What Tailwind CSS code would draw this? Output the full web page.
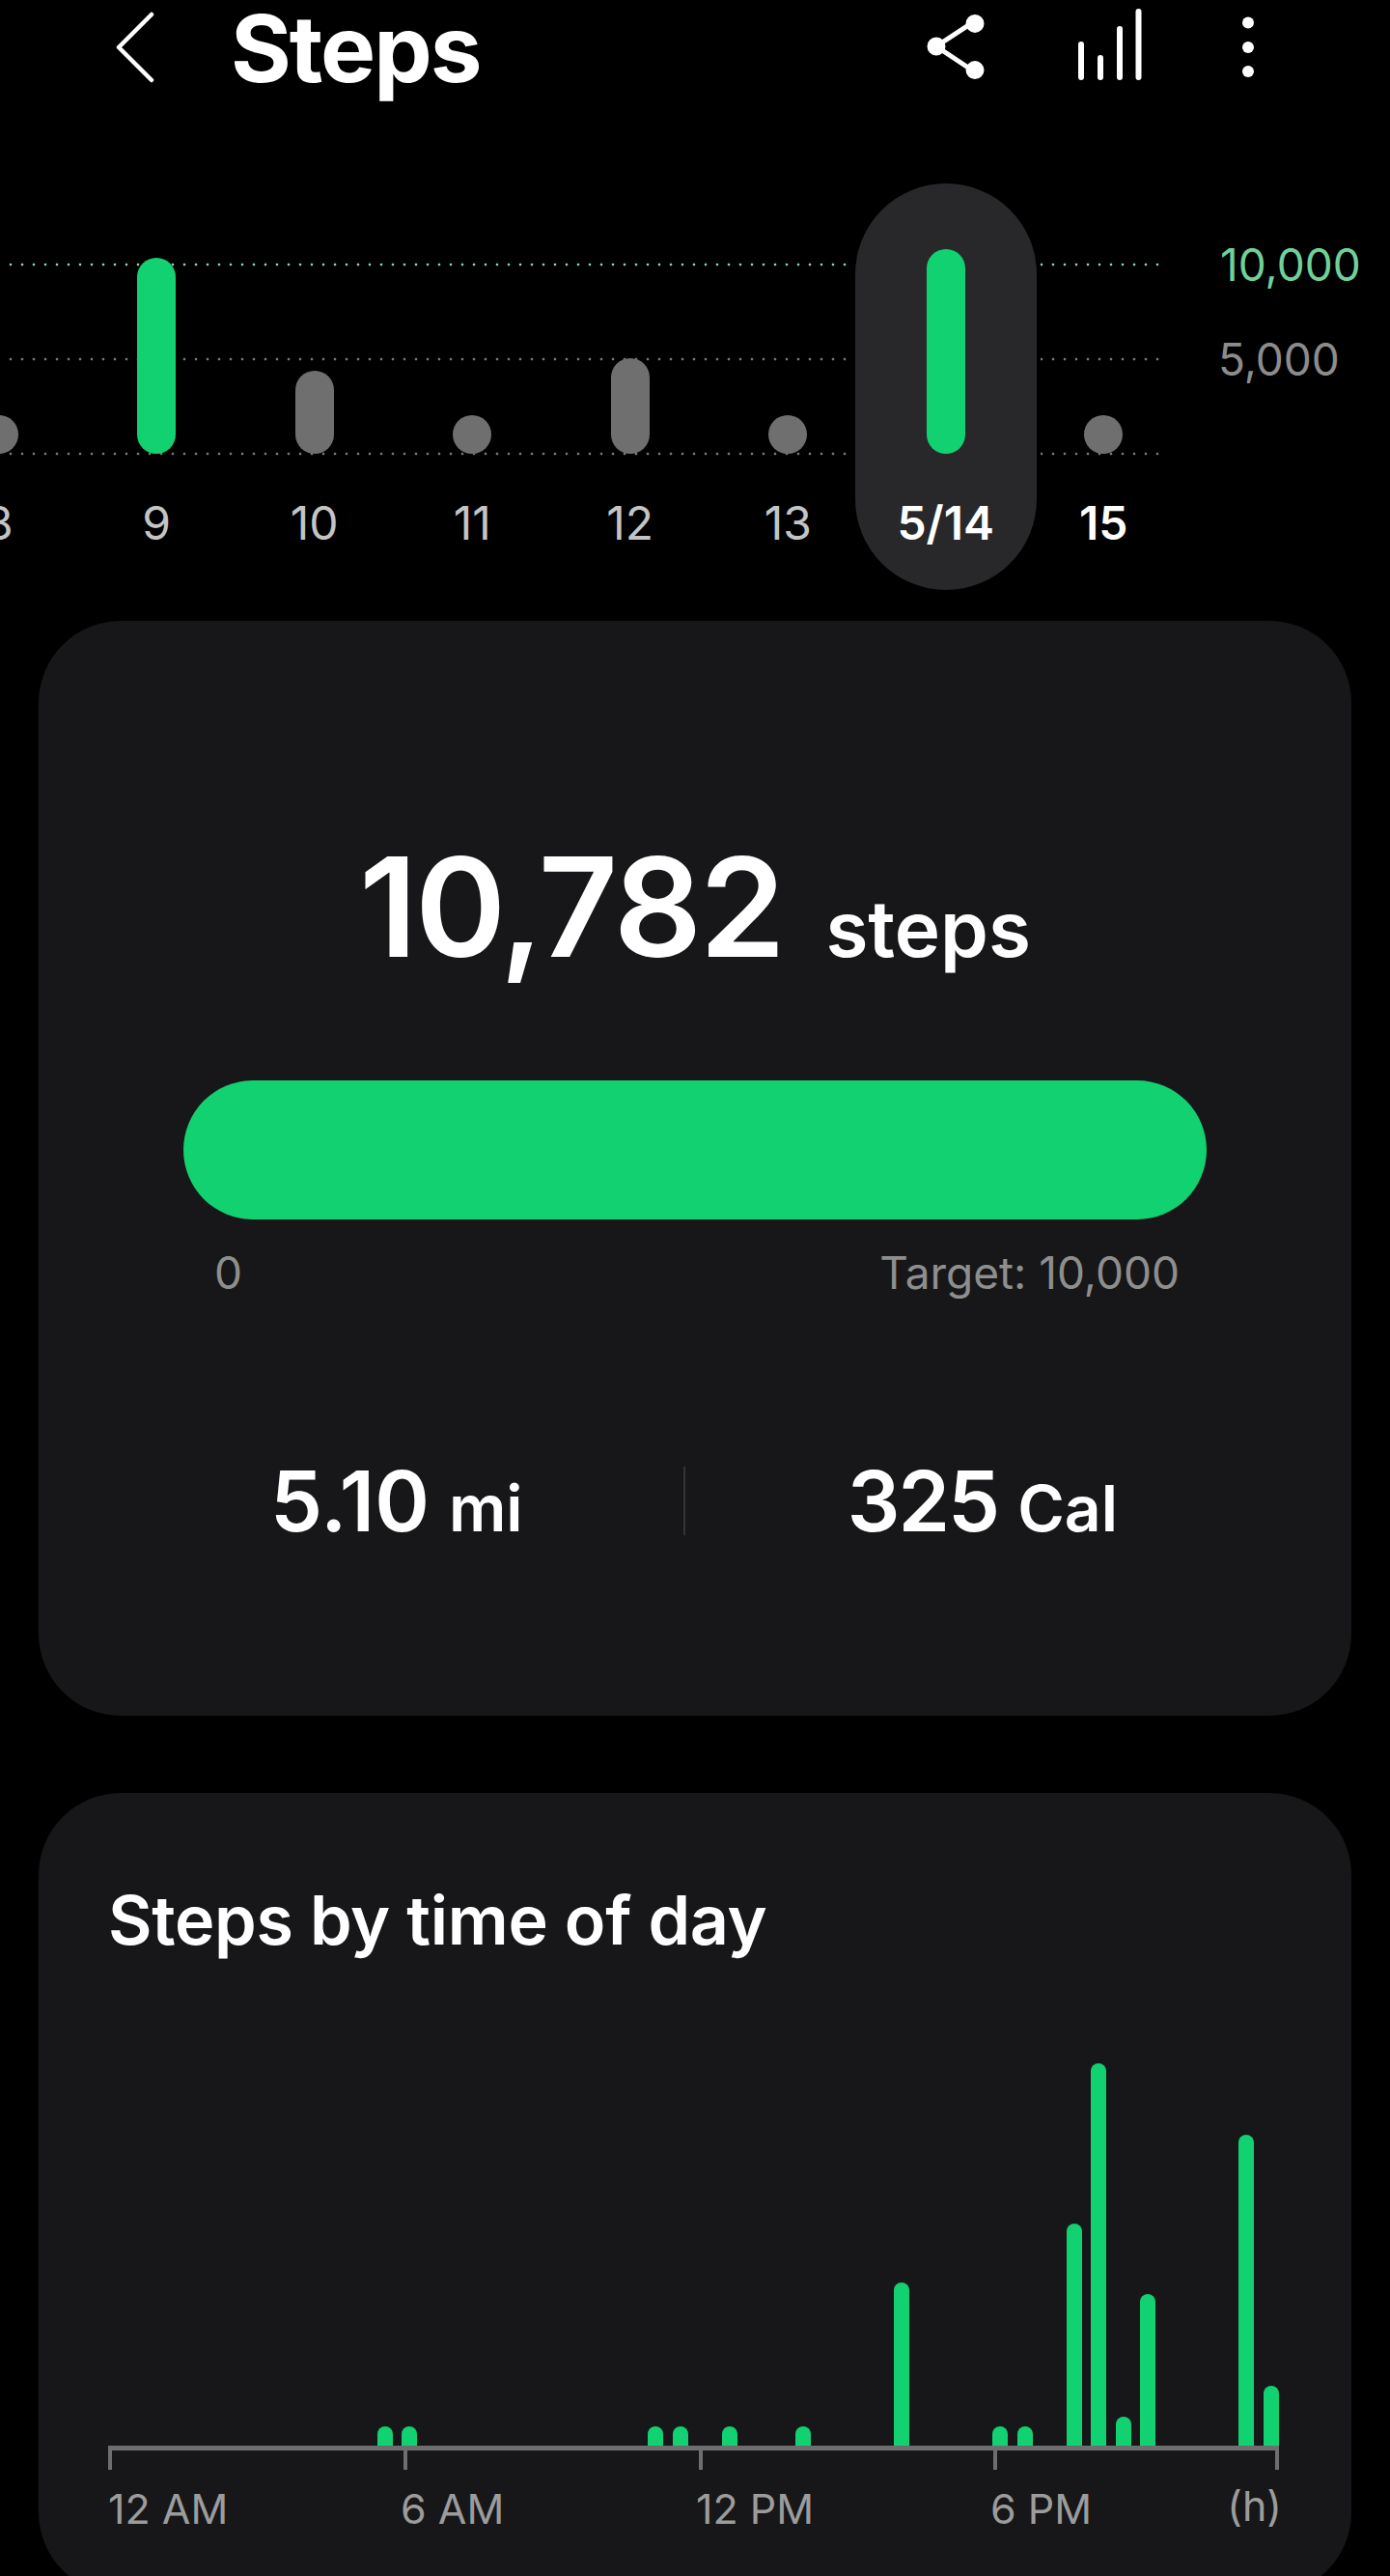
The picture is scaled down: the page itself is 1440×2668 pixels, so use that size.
<!DOCTYPE html>
<html lang="en">
<head>
    <meta charset="UTF-8">
    <meta name="viewport" content="width=device-width, initial-scale=1.0">
    <title>Steps</title>
    <script src="https://cdn.jsdelivr.net/npm/@tailwindcss/browser@4"></script>
</head>
<body class="bg-black">
<div class="w-[1440px] h-[2668px] overflow-hidden bg-black text-white font-['Inter','Noto_Sans',sans-serif]">

    <!-- Top bar -->
    <header class="flex items-start h-[190px] pt-[2px]">
        <svg class="ml-[120px] mt-[9px] w-[42px] h-[76px]" viewBox="0 0 42 76" fill="none" stroke="white" stroke-width="4.5" stroke-linecap="round" stroke-linejoin="round"><path d="M37 4 3 38l34 34"/></svg>
        <h1 class="ml-[77px] w-[260px] text-[96px] leading-[96px] font-bold tracking-[-2px]">Steps</h1>
        <svg class="ml-[461px] mt-[8px] w-[64px] h-[76px]" viewBox="0 0 64 76" fill="white" stroke="white" stroke-width="5"><path d="M46 14.400 10 38l36 24" fill="none"/><circle cx="10" cy="38" r="7"/><circle cx="50" cy="14.400" r="7"/><circle cx="50" cy="62.600" r="7"/></svg>
        <svg class="ml-[90px] mt-[6px] w-[72px] h-[76px]" viewBox="0 0 72 76" fill="none" stroke="white" stroke-width="6" stroke-linecap="round"><path d="M6 72V38M26 72V52M46 72V22M65.500 72V4"/></svg>
        <svg class="ml-[95px] mt-[8px] w-[24px] h-[76px]" viewBox="0 0 24 76" fill="white"><circle cx="12" cy="13.500" r="6"/><circle cx="12" cy="39" r="6"/><circle cx="12" cy="64" r="6"/></svg>
    </header>

    <!-- Daily chart -->
    <section class="relative h-[453px]">
        <div class="absolute left-[5px] top-[82px] w-[1204px] h-1 bg-[radial-gradient(circle,#86d8ac_1.5px,transparent_1.6px)] bg-[length:12px_4px]"></div>
        <div class="absolute left-[5px] top-[180px] w-[1204px] h-1 bg-[radial-gradient(circle,#7a7a7a_1.5px,transparent_1.6px)] bg-[length:12px_4px]"></div>
        <div class="absolute left-[5px] top-[278px] w-[1204px] h-1 bg-[radial-gradient(circle,#7a7a7a_1.5px,transparent_1.6px)] bg-[length:12px_4px]"></div>

        <div class="absolute left-[1264px] top-[56px] text-[46px] leading-[56px] text-[#70d09a]">10,000</div>
        <div class="absolute left-[1262px] top-[154px] text-[46px] leading-[56px] text-[#8c8c8c]">5,000</div>

        <div class="relative flex ml-[-83px]">
            <div class="w-[163.5px] h-[421px] flex flex-col items-center">
                <div class="h-[280px] flex items-end"><div class="w-10 h-10 rounded-full bg-[#6f6f6f]"></div></div>
                <span class="mt-[44px] text-[48px] leading-[56px] text-[#c4c4c4]">8</span>
            </div>
            <div class="w-[163.5px] h-[421px] flex flex-col items-center">
                <div class="h-[280px] flex items-end"><div class="w-10 h-[203px] rounded-full bg-[#12d170]"></div></div>
                <span class="mt-[44px] text-[48px] leading-[56px] text-[#c4c4c4]">9</span>
            </div>
            <div class="w-[163.5px] h-[421px] flex flex-col items-center">
                <div class="h-[280px] flex items-end"><div class="w-10 h-[86px] rounded-full bg-[#6f6f6f]"></div></div>
                <span class="mt-[44px] text-[48px] leading-[56px] text-[#c4c4c4]">10</span>
            </div>
            <div class="w-[163.5px] h-[421px] flex flex-col items-center">
                <div class="h-[280px] flex items-end"><div class="w-10 h-10 rounded-full bg-[#6f6f6f]"></div></div>
                <span class="mt-[44px] text-[48px] leading-[56px] text-[#c4c4c4]">11</span>
            </div>
            <div class="w-[163.5px] h-[421px] flex flex-col items-center">
                <div class="h-[280px] flex items-end"><div class="w-10 h-[99px] rounded-full bg-[#6f6f6f]"></div></div>
                <span class="mt-[44px] text-[48px] leading-[56px] text-[#c4c4c4]">12</span>
            </div>
            <div class="w-[163.5px] h-[421px] flex flex-col items-center">
                <div class="h-[280px] flex items-end"><div class="w-10 h-10 rounded-full bg-[#6f6f6f]"></div></div>
                <span class="mt-[44px] text-[48px] leading-[56px] text-[#c4c4c4]">13</span>
            </div>
            <!-- selected day -->
            <div class="w-[163.5px] h-[421px] flex flex-col items-center relative">
                <div class="absolute left-[-12px] top-0 w-[188px] h-[421px] rounded-full bg-[#28282a] ring-4 ring-black"></div>
                <div class="relative h-[280px] flex items-end"><div class="w-10 h-[212px] rounded-full bg-[#12d170]"></div></div>
                <span class="relative mt-[44px] text-[48px] leading-[56px] font-semibold">5/14</span>
            </div>
            <div class="w-[163.5px] h-[421px] flex flex-col items-center">
                <div class="h-[280px] flex items-end"><div class="w-10 h-10 rounded-full bg-[#6f6f6f]"></div></div>
                <span class="mt-[44px] text-[48px] leading-[56px] font-semibold">15</span>
            </div>
        </div>
    </section>

    <!-- Summary card -->
    <section class="mx-10 h-[1134px] rounded-[85px] bg-[#171719] px-[150px]">
        <div class="flex items-baseline justify-center pt-[216px] h-[476px]">
            <span class="text-[143px] leading-[160px] font-semibold tracking-[-2.500px]">10,782</span>
            <span class="ml-[44px] text-[80px] leading-[160px] font-semibold">steps</span>
        </div>
        <div class="h-[144px] rounded-full bg-[#12d170]"></div>
        <div class="flex justify-between mt-[27px] pl-[32px] pr-[28px] text-[46px] leading-[56px] text-[#8e8e8e]">
            <span>0</span>
            <span>Target: 10,000</span>
        </div>
        <div class="flex items-center justify-between mt-[159px] pl-[90px] pr-[92px]">
            <div class="flex items-baseline w-[260px]">
                <span class="text-[86px] leading-[100px] font-semibold">5.10</span>
                <span class="ml-[20px] text-[66px] leading-[100px] font-semibold">mi</span>
            </div>
            <div class="w-[2px] h-[71px] mt-[-8px] bg-[#343436]"></div>
            <div class="flex items-baseline">
                <span class="text-[86px] leading-[100px] font-semibold tracking-[-2px]">325</span>
                <span class="ml-[20px] text-[66px] leading-[100px] font-semibold">Cal</span>
            </div>
        </div>
    </section>

    <!-- Time of day card -->
    <section class="mx-10 mt-20 h-[830px] rounded-[85px] bg-[#171719] pl-[72px] pt-[94px]">
        <h2 class="text-[70px] leading-[76px] font-semibold tracking-[-0.300px]">Steps by time of day</h2>

        <div class="mt-[106px] ml-[-2px] grid grid-cols-[repeat(48,25.5px)] h-[400px] items-end">
            <div class="col-start-12 row-start-1 w-4 h-5 rounded-t-full bg-[#12d170]"></div>
            <div class="col-start-13 row-start-1 w-4 h-5 rounded-t-full bg-[#12d170]"></div>
            <div class="col-start-23 row-start-1 w-4 h-5 rounded-t-full bg-[#12d170]"></div>
            <div class="col-start-24 row-start-1 w-4 h-5 rounded-t-full bg-[#12d170]"></div>
            <div class="col-start-26 row-start-1 w-4 h-5 rounded-t-full bg-[#12d170]"></div>
            <div class="col-start-29 row-start-1 w-4 h-5 rounded-t-full bg-[#12d170]"></div>
            <div class="col-start-33 row-start-1 w-4 h-[169px] rounded-t-full bg-[#12d170]"></div>
            <div class="col-start-37 row-start-1 w-4 h-5 rounded-t-full bg-[#12d170]"></div>
            <div class="col-start-38 row-start-1 w-4 h-5 rounded-t-full bg-[#12d170]"></div>
            <div class="col-start-40 row-start-1 w-4 h-[230px] rounded-t-full bg-[#12d170]"></div>
            <div class="col-start-41 row-start-1 w-4 h-[396px] rounded-t-full bg-[#12d170]"></div>
            <div class="col-start-42 row-start-1 w-4 h-[30px] rounded-t-full bg-[#12d170]"></div>
            <div class="col-start-43 row-start-1 w-4 h-[157px] rounded-t-full bg-[#12d170]"></div>
            <div class="col-start-47 row-start-1 w-4 h-[322px] rounded-t-full bg-[#12d170]"></div>
            <div class="col-start-48 row-start-1 w-4 h-[62px] rounded-t-full bg-[#12d170]"></div>
        </div>

        <div class="flex w-[1213px] border-t-[5px] border-[#6e6e6e]">
            <div class="w-[306px] h-5 border-l-4 border-[#6e6e6e]"></div>
            <div class="w-[306px] h-5 border-l-4 border-[#6e6e6e]"></div>
            <div class="w-[305px] h-5 border-l-4 border-[#6e6e6e]"></div>
            <div class="w-[296px] h-5 border-x-4 border-[#6e6e6e]"></div>
        </div>
        <div class="flex w-[1213px] mt-[12px] text-[43px] leading-[56px] text-[#9c9c9c]">
            <span class="w-[303px]">12 AM</span>
            <span class="w-[306px]">6 AM</span>
            <span class="w-[305px]">12 PM</span>
            <span class="w-[299px] flex justify-between"><span>6 PM</span><span class="mt-[-3px] mr-[-3px]">(h)</span></span>
        </div>
    </section>
</div>
</body>
</html>
